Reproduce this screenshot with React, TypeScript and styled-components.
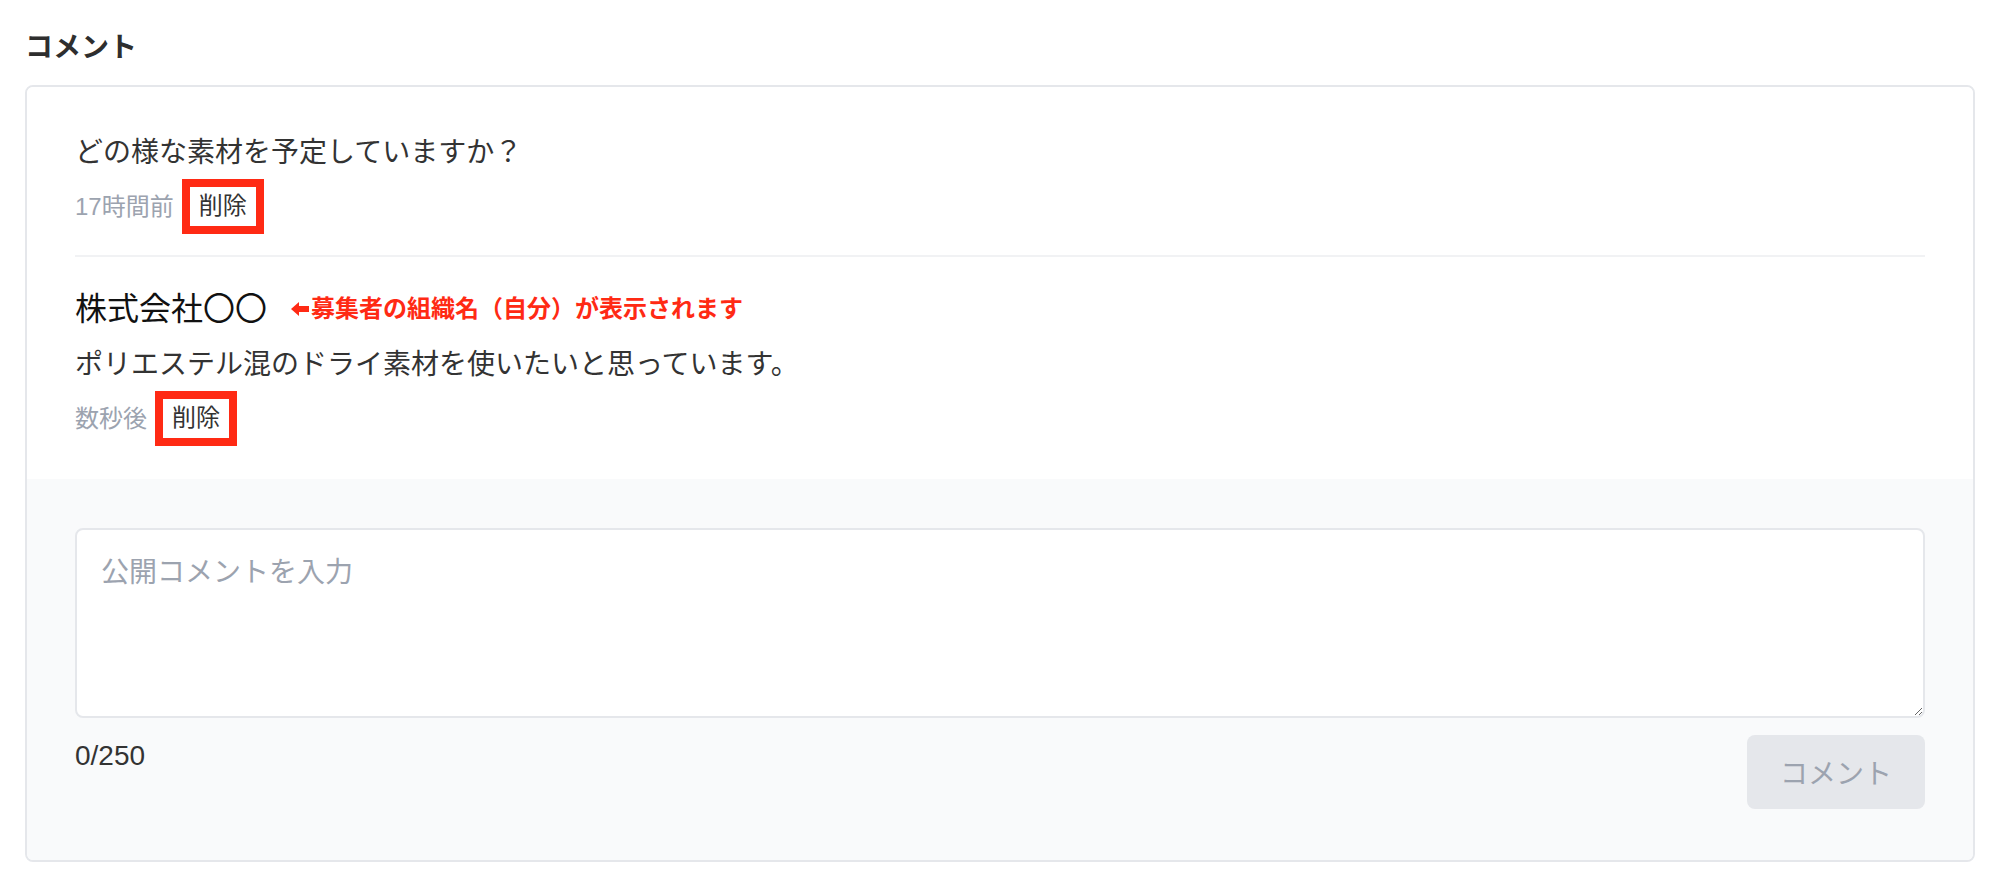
import React, { useState } from "react";
import styled, { createGlobalStyle } from "styled-components";

const GlobalStyle = createGlobalStyle`
  body {
    margin: 0;
    background: #ffffff;
    font-family: "Liberation Sans", "Noto Sans CJK JP", sans-serif;
    color: #333333;
  }
`;

const Page = styled.div`
  padding: 27px 23px 0 25px;
`;

const Heading = styled.h2`
  margin: 0 0 16px;
  font-size: 28px;
  line-height: 42px;
  font-weight: 700;
  color: #2e2e2e;
`;

const Card = styled.section`
  border: 2px solid #e5e7eb;
  border-radius: 8px;
  overflow: hidden;
`;

const CommentList = styled.div`
  padding: 17px 48px 12px;
  background: #ffffff;
`;

const CommentItem = styled.div`
  padding: 28px 0 21px;

  & + & {
    border-top: 2px solid #f1f2f4;
  }
`;

const Author = styled.div`
  display: flex;
  align-items: center;
  gap: 24px;
  font-size: 32px;
  line-height: 48px;
  color: #111111;
  margin-bottom: 11px;
`;

const Note = styled.span`
  display: inline-flex;
  align-items: center;
  gap: 2px;
  font-size: 24px;
  line-height: 36px;
  font-weight: 700;
  color: #ff2a14;
`;

const Body = styled.p`
  margin: 0;
  font-size: 28px;
  line-height: 42px;
  color: #333333;
`;

const Meta = styled.div`
  display: flex;
  align-items: center;
  gap: 8px;
  margin-top: 5px;
`;

const Time = styled.span`
  font-size: 24px;
  line-height: 36px;
  color: #9ca3af;
`;

const DeleteButton = styled.button`
  border: 8px solid #ff2a14;
  background: #ffffff;
  padding: 1px 9px 2px;
  font-family: inherit;
  font-size: 24px;
  line-height: 36px;
  color: #333333;
  cursor: pointer;
`;

const Composer = styled.div`
  background: #f9fafb;
  padding: 49px 48px 51px;
`;

const TextArea = styled.textarea`
  display: block;
  box-sizing: border-box;
  width: 100%;
  height: 190px;
  border: 2px solid #e5e7eb;
  border-radius: 8px;
  background: #ffffff;
  padding: 22px 24px;
  font-family: inherit;
  font-size: 28px;
  line-height: 42px;
  color: #333333;
  outline: none;

  &::placeholder {
    color: #9ca3af;
  }
`;

const Footer = styled.div`
  display: flex;
  justify-content: space-between;
  align-items: flex-start;
  margin-top: 17px;
`;

const Counter = styled.span`
  font-size: 28px;
  line-height: 42px;
  color: #333333;
`;

const SubmitButton = styled.button`
  width: 178px;
  height: 74px;
  border: none;
  border-radius: 8px;
  background: #e5e7eb;
  font-family: inherit;
  font-size: 28px;
  color: #9ca3af;
`;

const ArrowLeft = () => (
  <svg width="18" height="16" viewBox="0 0 18 16" aria-hidden="true">
    <path d="M0 8 L8 1 L8 5 L18 5 L18 11 L8 11 L8 15 Z" fill="#ff2a14" />
  </svg>
);

type Comment = {
  id: number;
  author?: string;
  body: string;
  time: string;
};

const comments: Comment[] = [
  { id: 1, body: "どの様な素材を予定していますか？", time: "17時間前" },
  {
    id: 2,
    author: "株式会社〇〇",
    body: "ポリエステル混のドライ素材を使いたいと思っています。",
    time: "数秒後",
  },
];

const MAX = 250;

export default function App() {
  const [text, setText] = useState("");

  return (
    <Page>
      <GlobalStyle />
      <Heading>コメント</Heading>
      <Card>
        <CommentList>
          {comments.map((c) => (
            <CommentItem key={c.id}>
              {c.author && (
                <Author>
                  {c.author}
                  <Note>
                    <ArrowLeft />
                    募集者の組織名（自分）が表示されます
                  </Note>
                </Author>
              )}
              <Body>{c.body}</Body>
              <Meta>
                <Time>{c.time}</Time>
                <DeleteButton>削除</DeleteButton>
              </Meta>
            </CommentItem>
          ))}
        </CommentList>
        <Composer>
          <TextArea
            placeholder="公開コメントを入力"
            value={text}
            maxLength={MAX}
            onChange={(e) => setText(e.target.value)}
          />
          <Footer>
            <Counter>
              {text.length}/{MAX}
            </Counter>
            <SubmitButton disabled={!text}>コメント</SubmitButton>
          </Footer>
        </Composer>
      </Card>
    </Page>
  );
}
